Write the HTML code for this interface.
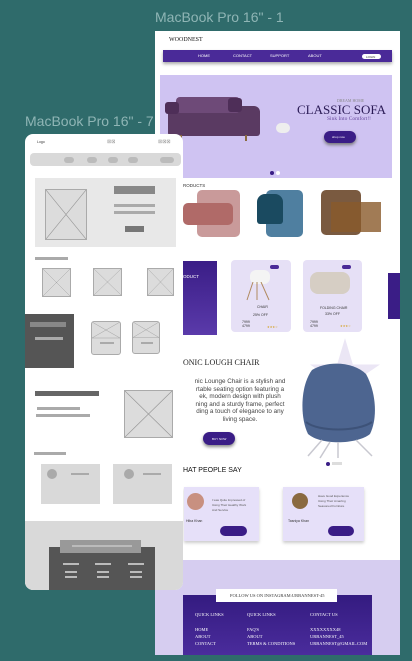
<!DOCTYPE html>
<html><head><meta charset="utf-8"><style>
*{margin:0;padding:0;box-sizing:border-box}
body{width:412px;height:661px;background:#2f6b6b;position:relative;overflow:hidden;font-family:"Liberation Sans",sans-serif}
.a{position:absolute}
.t{font-size:5px;color:#333;white-space:nowrap}
.s{font-family:"Liberation Serif",serif}
.g{background:#d9d9d9}
.x{background:#dcdcdc;border:1px solid #aaa;overflow:hidden}
.x svg{position:absolute;left:0;top:0;width:100%;height:100%}
.l{position:absolute;height:2px;background:#aaa}
</style></head><body>
<div class="a" style="left:155px;top:9px;font-size:14px;color:#8fb5b5">MacBook Pro 16" - 1</div>
<div class="a" style="left:25px;top:113px;font-size:14px;color:#8fb5b5">MacBook Pro 16" - 7</div>

<!-- right page -->
<div class="a" style="left:155px;top:31px;width:245px;height:624px;background:#fff"></div>
<div class="a t s" style="left:169px;top:37px;font-size:6px;color:#111">WOODNEST</div>
<div class="a" style="left:163px;top:50px;width:229px;height:12px;background:#4a2a98;box-shadow:0 2px 3px #aaa"></div>
<div class="a t" style="left:198px;top:53px;color:#fff;font-size:4px">HOME</div>
<div class="a t" style="left:233px;top:53px;color:#fff;font-size:4px">CONTACT</div>
<div class="a t" style="left:270px;top:53px;color:#fff;font-size:4px">SUPPORT</div>
<div class="a t" style="left:308px;top:53px;color:#fff;font-size:4px">ABOUT</div>
<div class="a" style="left:362px;top:54px;width:19px;height:5px;background:#fff;border-radius:3px"></div>
<div class="a t" style="left:366px;top:54.5px;font-size:3px;color:#333">LOGIN</div>
<div class="a" style="left:160px;top:75px;width:232px;height:103px;background:#cfc3f2"></div>
<div class="a" style="left:168px;top:106px;width:92px;height:30px;background:#5a3a62;border-radius:6px 6px 3px 3px"></div>
<div class="a" style="left:176px;top:97px;width:64px;height:16px;background:#6e4a78;border-radius:4px"></div>
<div class="a" style="left:165px;top:102px;width:14px;height:12px;background:#4e2e58;border-radius:3px"></div>
<div class="a" style="left:228px;top:98px;width:14px;height:14px;background:#4e2e58;border-radius:3px"></div>
<div class="a" style="left:180px;top:135px;width:2px;height:6px;background:#8a6a40"></div>
<div class="a" style="left:245px;top:135px;width:2px;height:6px;background:#8a6a40"></div>
<div class="a" style="left:276px;top:123px;width:14px;height:10px;background:#eee;border-radius:5px"></div>
<div class="a t s" style="left:337px;top:98px;font-size:4px;color:#888">DREAM HOME</div>
<div class="a t s" style="left:297px;top:102px;font-size:13px;color:#2a1a55">CLASSIC SOFA</div>
<div class="a t s" style="left:327px;top:116px;font-size:5.5px;color:#6a4aa0">Sink Into Comfort!!</div>
<div class="a" style="left:324px;top:131px;width:32px;height:12px;background:#3a1d86;border-radius:6px;box-shadow:0 2px 3px #777"></div>
<div class="a t" style="left:332px;top:135px;font-size:3px;color:#fff">shop now</div>
<div class="a" style="left:270px;top:171px;width:4px;height:4px;background:#3a1d86;border-radius:50%"></div>
<div class="a" style="left:276px;top:171px;width:4px;height:4px;background:#fff;border-radius:50%"></div>
<div class="a t" style="left:180px;top:183px;font-size:4.5px">PRODUCTS</div>
<div class="a" style="left:197px;top:190px;width:43px;height:47px;background:#c99a9a;border-radius:5px"></div>
<div class="a" style="left:183px;top:203px;width:50px;height:22px;background:#b06a68;border-radius:5px"></div>
<div class="a" style="left:266px;top:190px;width:37px;height:47px;background:#4f7fa0;border-radius:5px"></div>
<div class="a" style="left:257px;top:194px;width:26px;height:30px;background:#1a4a60;border-radius:8px 8px 3px 3px"></div>
<div class="a" style="left:321px;top:190px;width:40px;height:45px;background:#7a5a40;border-radius:5px"></div>
<div class="a" style="left:331px;top:202px;width:50px;height:30px;background:#8a5a2a;opacity:.8"></div>
<div class="a" style="left:183px;top:261px;width:34px;height:74px;background:linear-gradient(#3a1d86,#5a3aaa)"></div>
<div class="a t" style="left:183px;top:274px;color:#fff;font-size:4.5px">ODUCT</div>
<div class="a" style="left:388px;top:273px;width:12px;height:46px;background:#3a1d86"></div>
<div class="a" style="left:231px;top:260px;width:60px;height:72px;background:#e6e0f6;border-radius:4px"></div>
<div class="a" style="left:303px;top:260px;width:59px;height:72px;background:#e6e0f6;border-radius:4px"></div>
<div class="a" style="left:270px;top:265px;width:9px;height:4px;background:#4a2a98;border-radius:2px"></div>
<div class="a" style="left:342px;top:265px;width:9px;height:4px;background:#4a2a98;border-radius:2px"></div>
<div class="a" style="left:250px;top:270px;width:20px;height:14px;background:#f4f4f4;border-radius:6px"></div>
<svg class="a" style="left:245px;top:282px" width="30" height="20"><path d="M8 0L2 18M12 0L12 18M16 0L24 18" stroke="#b08a60" stroke-width="1"/></svg>
<div class="a" style="left:310px;top:272px;width:40px;height:22px;background:#d6cec4;border-radius:8px"></div>
<div class="a t" style="left:257px;top:305px;font-size:3.5px">CHAIR</div>
<div class="a t" style="left:253px;top:313px;font-size:3.5px">25% OFF</div>
<div class="a t" style="left:320px;top:306px;font-size:3.5px">FOLDING CHAIR</div>
<div class="a t" style="left:325px;top:312px;font-size:3.5px">33% OFF</div>
<div class="a t" style="left:242px;top:320px;font-size:3.5px">7999<br>4799</div>
<div class="a t" style="left:310px;top:320px;font-size:3.5px">7999<br>4799</div>
<div class="a t" style="left:267px;top:325px;font-size:3px;color:#d4a020">★★★☆</div>
<div class="a t" style="left:340px;top:324px;font-size:3px;color:#d4a020">★★★☆</div>
<div class="a t s" style="left:183px;top:358px;font-size:8px;color:#222">ONIC LOUGH CHAIR</div>
<div class="a" style="left:178px;top:378px;width:124px;font-size:6.3px;line-height:7.6px;color:#444;text-align:center;white-space:nowrap">nic Lounge Chair is a stylish and<br>rtable seating option featuring a<br>ek, modern design with plush<br>ning and a sturdy frame, perfect<br>ding a touch of elegance to any<br>living space.</div>
<div class="a" style="left:203px;top:432px;width:32px;height:13px;background:#3a1d86;border-radius:7px;box-shadow:0 2px 3px #888"></div>
<div class="a t" style="left:212px;top:436.5px;font-size:3px;color:#fff">BUY NOW</div>
<svg class="a" style="left:310px;top:338px" width="70" height="68" viewBox="26 0 98 95"><polygon points="75,0 86,37 124,37 93,58 104,95 75,72 46,95 57,58 26,37 64,37" fill="#ebe6f5"/></svg>
<svg class="a" style="left:298px;top:362px" width="84" height="98"><path d="M14 8C30 -2 56 0 68 12C78 30 80 56 72 72C60 82 24 84 10 72C2 56 2 24 14 8Z" fill="#4d6590"/><path d="M8 60C20 70 60 70 74 60" stroke="#3d5278" stroke-width="2" fill="none"/><path d="M24 78L10 94M40 80L40 96M58 78L74 94M32 80L22 96" stroke="#c8c8d0" stroke-width="1.5"/></svg>
<div class="a" style="left:326px;top:462px;width:4px;height:4px;background:#3a1d86;border-radius:50%"></div>
<div class="a" style="left:332px;top:462px;width:10px;height:3px;background:#ddd"></div>
<div class="a t" style="left:183px;top:467px;font-size:7px;color:#111">HAT PEOPLE SAY</div>
<div class="a" style="left:184px;top:487px;width:75px;height:54px;background:#e6e0f9;box-shadow:0 2px 3px #ccc"></div>
<div class="a" style="left:283px;top:487px;width:81px;height:54px;background:#e6e0f9;box-shadow:0 2px 3px #ccc"></div>
<div class="a" style="left:187px;top:493px;width:17px;height:17px;background:#c89080;border-radius:50%"></div>
<div class="a" style="left:292px;top:493px;width:16px;height:16px;background:#8a6a40;border-radius:50%"></div>
<div class="a" style="left:212px;top:498px;width:36px;font-size:3px;line-height:5px;color:#555">I was Quite Impressed of Using Their Healthy Work And Service</div>
<div class="a" style="left:318px;top:494px;width:38px;font-size:3px;line-height:5px;color:#555">Have Good Experience Using Their Amazing Seasoned Furniture</div>
<div class="a t" style="left:186px;top:519px;font-size:3.5px">Hiba Khan</div>
<div class="a t" style="left:288px;top:519px;font-size:3.5px">Tasniya Khan</div>
<div class="a" style="left:220px;top:526px;width:27px;height:10px;background:#3a1d86;border-radius:5px"></div>
<div class="a" style="left:328px;top:526px;width:26px;height:10px;background:#3a1d86;border-radius:5px"></div>
<div class="a" style="left:155px;top:560px;width:245px;height:95px;background:#d6cdf0"></div>
<div class="a" style="left:183px;top:595px;width:189px;height:60px;background:linear-gradient(#341b80,#4a2c9c)"></div>
<div class="a" style="left:216px;top:589px;width:121px;height:13px;background:#fff"></div>
<div class="a t s" style="left:230px;top:593px;font-size:4.5px">FOLLOW US ON INSTAGRAM:URBANNEST-45</div>
<div class="a t s" style="left:195px;top:612px;color:#fff;font-size:4.5px">QUICK LINKS</div>
<div class="a t s" style="left:247px;top:612px;color:#fff;font-size:4.5px">QUICK LINKS</div>
<div class="a t s" style="left:310px;top:612px;color:#fff;font-size:4.5px">CONTACT US</div>
<div class="a t s" style="left:195px;top:626px;color:#fff;font-size:4.5px;line-height:7px">HOME<br>ABOUT<br>CONTACT</div>
<div class="a t s" style="left:247px;top:626px;color:#fff;font-size:4.5px;line-height:7px">FAQ'S<br>ABOUT<br>TERMS &amp; CONDITIONS</div>
<div class="a t s" style="left:310px;top:626px;color:#fff;font-size:4.5px;line-height:7px">XXXXXXXX48<br>URBANNEST_45<br>URBANNEST@GMAIL.COM</div>

<!-- left wireframe -->
<div class="a" style="left:25px;top:134px;width:158px;height:456px;background:#fff;border-radius:8px;overflow:hidden">
 <div class="a t" style="left:12px;top:6px;font-size:3.5px">Logo</div>
 <div class="a t" style="left:82px;top:5px;font-size:5px;color:#999">⊠⊠</div>
 <div class="a t" style="left:133px;top:5px;font-size:5px;color:#999">⊠⊠⊠</div>
 <div class="a g" style="left:5px;top:19px;width:151px;height:13px;border-radius:4px"></div>
 <div class="a" style="left:39px;top:23px;width:10px;height:6px;background:#bbb;border-radius:3px"></div>
 <div class="a" style="left:62px;top:23px;width:10px;height:6px;background:#bbb;border-radius:3px"></div>
 <div class="a" style="left:83px;top:23px;width:10px;height:6px;background:#bbb;border-radius:3px"></div>
 <div class="a" style="left:103px;top:23px;width:10px;height:6px;background:#bbb;border-radius:3px"></div>
 <div class="a" style="left:135px;top:23px;width:14px;height:6px;background:#bbb;border-radius:3px"></div>
 <div class="a" style="left:10px;top:44px;width:141px;height:69px;background:#e8e8e8"></div>
 <div class="a x" style="left:20px;top:55px;width:42px;height:51px"><svg viewBox="0 0 10 10" preserveAspectRatio="none"><path d="M0 0L10 10M10 0L0 10" stroke="#999" stroke-width=".15"/></svg></div>
 <div class="a" style="left:89px;top:52px;width:41px;height:8px;background:#888"></div>
 <div class="a" style="left:89px;top:70px;width:41px;height:3px;background:#aaa"></div>
 <div class="a" style="left:89px;top:77px;width:41px;height:3px;background:#aaa"></div>
 <div class="a" style="left:100px;top:92px;width:19px;height:6px;background:#777"></div>
 <div class="a" style="left:10px;top:123px;width:33px;height:3px;background:#aaa"></div>
 <div class="a x" style="left:17px;top:134px;width:29px;height:29px"><svg viewBox="0 0 10 10" preserveAspectRatio="none"><path d="M0 0L10 10M10 0L0 10" stroke="#999" stroke-width=".15"/></svg></div>
 <div class="a x" style="left:68px;top:134px;width:29px;height:28px"><svg viewBox="0 0 10 10" preserveAspectRatio="none"><path d="M0 0L10 10M10 0L0 10" stroke="#999" stroke-width=".15"/></svg></div>
 <div class="a x" style="left:122px;top:134px;width:27px;height:28px"><svg viewBox="0 0 10 10" preserveAspectRatio="none"><path d="M0 0L10 10M10 0L0 10" stroke="#999" stroke-width=".15"/></svg></div>
 <div class="a" style="left:0;top:180px;width:49px;height:54px;background:#555"></div>
 <div class="a" style="left:5px;top:188px;width:36px;height:5px;background:#888"></div>
 <div class="a" style="left:10px;top:203px;width:28px;height:3px;background:#aaa"></div>
 <div class="a x" style="left:66px;top:187px;width:30px;height:34px;border-radius:3px"><svg viewBox="0 0 10 10" preserveAspectRatio="none"><path d="M0 0L10 5M10 0L0 5M0 5L10 5" stroke="#999" stroke-width=".15"/></svg><div class="l" style="left:8px;top:20px;width:14px"></div></div>
 <div class="a x" style="left:107px;top:187px;width:28px;height:33px;border-radius:3px"><svg viewBox="0 0 10 10" preserveAspectRatio="none"><path d="M0 0L10 5M10 0L0 5M0 5L10 5" stroke="#999" stroke-width=".15"/></svg><div class="l" style="left:8px;top:20px;width:12px"></div></div>
 <div class="a" style="left:10px;top:257px;width:64px;height:5px;background:#666"></div>
 <div class="a" style="left:12px;top:273px;width:43px;height:3px;background:#aaa"></div>
 <div class="a" style="left:11px;top:280px;width:54px;height:3px;background:#aaa"></div>
 <div class="a x" style="left:99px;top:256px;width:49px;height:48px"><svg viewBox="0 0 10 10" preserveAspectRatio="none"><path d="M0 0L10 10M10 0L0 10" stroke="#999" stroke-width=".15"/></svg></div>
 <div class="a" style="left:9px;top:318px;width:32px;height:3px;background:#aaa"></div>
 <div class="a g" style="left:16px;top:330px;width:59px;height:40px"></div>
 <div class="a g" style="left:88px;top:330px;width:59px;height:40px"></div>
 <div class="a" style="left:22px;top:335px;width:10px;height:10px;background:#aaa;border-radius:50%"></div>
 <div class="a" style="left:99px;top:335px;width:10px;height:10px;background:#aaa;border-radius:50%"></div>
 <div class="l" style="left:46px;top:339px;width:18px"></div>
 <div class="l" style="left:118px;top:339px;width:18px"></div>
 <div class="a g" style="left:0;top:387px;width:158px;height:69px"></div>
 <div class="a" style="left:24px;top:413px;width:106px;height:43px;background:#555"></div>
 <div class="a" style="left:35px;top:406px;width:81px;height:13px;background:#999"></div>
 <div class="l" style="left:47px;top:411px;width:60px;background:#bbb"></div>
 <div class="l" style="left:38px;top:429px;width:16px;background:#bbb"></div>
 <div class="l" style="left:70px;top:429px;width:16px;background:#bbb"></div>
 <div class="l" style="left:103px;top:429px;width:16px;background:#bbb"></div>
 <div class="l" style="left:40px;top:437px;width:12px;background:#bbb"></div>
 <div class="l" style="left:72px;top:437px;width:12px;background:#bbb"></div>
 <div class="l" style="left:105px;top:437px;width:12px;background:#bbb"></div>
 <div class="l" style="left:40px;top:442px;width:12px;background:#bbb"></div>
 <div class="l" style="left:72px;top:442px;width:12px;background:#bbb"></div>
 <div class="l" style="left:105px;top:442px;width:12px;background:#bbb"></div>
</div>
</body></html>
